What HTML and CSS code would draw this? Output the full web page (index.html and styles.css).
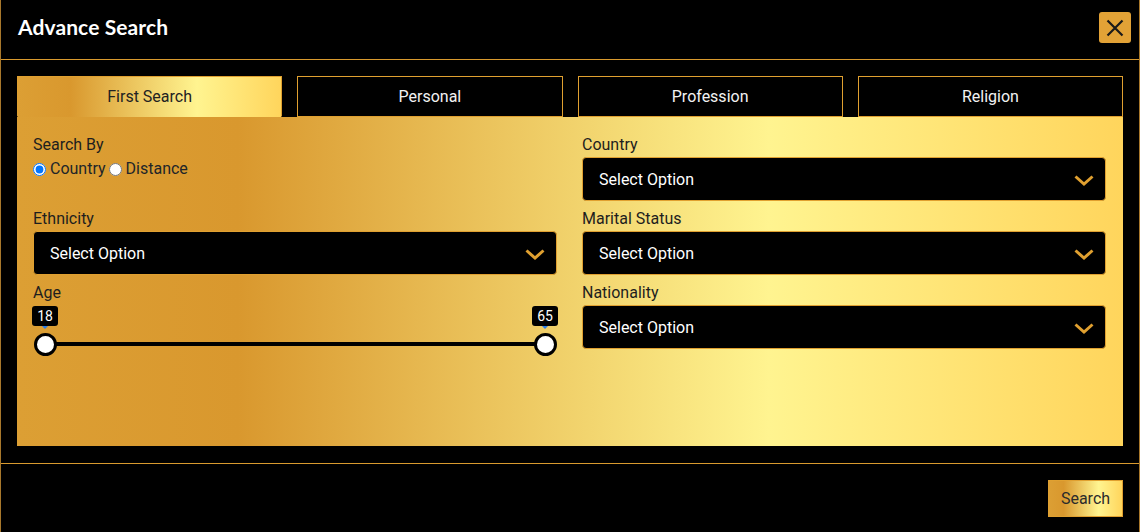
FILE: index.html
```html
<!DOCTYPE html>
<html lang="en">
<head>
<meta charset="utf-8">
<title>Advance Search</title>
<link rel="stylesheet" href="styles.css">
</head>
<body>
<div class="modal">
  <header class="modal-header">
    <h1 class="modal-title">Advance Search</h1>
    <button class="close-btn" aria-label="Close">
      <svg width="18" height="18" viewBox="0 0 18 18"><path d="M1.5 1.5 L16.5 16.5 M16.5 1.5 L1.5 16.5" stroke="#1a1a1a" stroke-width="2.2" fill="none"/></svg>
    </button>
  </header>
  <main class="modal-body">
    <nav class="tabs">
      <div class="tab active">First Search</div>
      <div class="tab">Personal</div>
      <div class="tab">Profession</div>
      <div class="tab">Religion</div>
    </nav>
    <section class="panel">
      <div class="col">
        <div class="group">
          <div class="label">Search By</div>
          <div class="radios">
            <label class="radio"><input type="radio" name="by" checked>Country</label>
            <label class="radio"><input type="radio" name="by">Distance</label>
          </div>
        </div>
        <div class="group">
          <div class="label">Ethnicity</div>
          <div class="select"><span>Select Option</span><svg class="chev" width="20" height="11" viewBox="0 0 20 11"><polyline points="1.5,1.5 10,9 18.5,1.5" fill="none" stroke="#e0a030" stroke-width="3"/></svg></div>
        </div>
        <div class="group">
          <div class="label">Age</div>
          <div class="range">
            <div class="track"></div>
            <div class="handle start"><span class="tip">18</span><span class="pin"></span><span class="thumb"></span></div>
            <div class="handle end"><span class="tip">65</span><span class="pin"></span><span class="thumb"></span></div>
          </div>
        </div>
      </div>
      <div class="col">
        <div class="group">
          <div class="label">Country</div>
          <div class="select"><span>Select Option</span><svg class="chev" width="20" height="11" viewBox="0 0 20 11"><polyline points="1.5,1.5 10,9 18.5,1.5" fill="none" stroke="#e0a030" stroke-width="3"/></svg></div>
        </div>
        <div class="group">
          <div class="label">Marital Status</div>
          <div class="select"><span>Select Option</span><svg class="chev" width="20" height="11" viewBox="0 0 20 11"><polyline points="1.5,1.5 10,9 18.5,1.5" fill="none" stroke="#e0a030" stroke-width="3"/></svg></div>
        </div>
        <div class="group">
          <div class="label">Nationality</div>
          <div class="select"><span>Select Option</span><svg class="chev" width="20" height="11" viewBox="0 0 20 11"><polyline points="1.5,1.5 10,9 18.5,1.5" fill="none" stroke="#e0a030" stroke-width="3"/></svg></div>
        </div>
      </div>
    </section>
  </main>
  <footer class="modal-footer">
    <button class="search-btn">Search</button>
  </footer>
</div>
</body>
</html>
```

FILE: styles.css
```css
* { box-sizing: border-box; }
html, body { margin: 0; padding: 0; background: #000; }
body {
  font-family: Roboto, "Liberation Sans", sans-serif;
  font-size: 16px;
  color: #212529;
  overflow: hidden;
}
.modal {
  width: 1140px;
  background: #000;
  border-left: 1px solid #a8782c;
  border-right: 1px solid #a8782c;
}
.modal-header {
  height: 60px;
  border-bottom: 1px solid #d99a2e;
  display: flex;
  align-items: center;
  justify-content: space-between;
  padding: 0 8px 0 17px;
}
.modal-title {
  margin: 0;
  margin-top: -6px;
  font-family: Lato, "Open Sans", sans-serif;
  font-weight: 700;
  font-size: 21px;
  color: #fff;
  letter-spacing: 0.1px;
}
.close-btn {
  width: 32px;
  height: 31px;
  margin-top: -4px;
  border: none;
  border-radius: 3px;
  background: #e2a236;
  display: flex;
  align-items: center;
  justify-content: center;
  padding: 0;
}
.modal-body { padding: 16px 16px 17px 16px; }
.tabs {
  display: grid;
  grid-template-columns: repeat(4, 1fr);
  gap: 15px;
}
.tab {
  height: 41px;
  border: 1px solid #e0a030;
  color: #f2f2f2;
  background: #000;
  display: flex;
  align-items: center;
  justify-content: center;
  font-size: 16px;
}
.tab.active {
  color: #222;
  border-color: #e0a030 #e0a030 transparent;
  background: linear-gradient(to right, #dc9f34 0%, #d9982e 20%, #fff490 68%, #ffd55c 100%);
}
.panel {
  height: 329px;
  padding: 16px 17px 0 16px;
  display: grid;
  grid-template-columns: 1fr 1fr;
  column-gap: 25px;
  align-content: start;
  background: linear-gradient(to right, #dc9f34 0%, #d9982e 20%, #fff490 68%, #ffd55c 100%);
}
.col { display: flex; flex-direction: column; }
.group { margin-bottom: 6px; }
.label { line-height: 24px; height: 24px; color: #1e1e1e; }
.radios { height: 44px; display: flex; align-items: flex-start; line-height: 24px; }
.radio { display: inline-flex; align-items: center; margin-right: 3px; }
.radio input { margin: 1px 4px 0 0; width: 13px; height: 13px; }
.select {
  height: 44px;
  background: #000;
  border: 1px solid #e0a030;
  border-radius: 4px;
  display: flex;
  align-items: center;
  justify-content: space-between;
  padding: 0 11px 0 16px;
  color: #fff;
}
.chev { display: block; margin-top: 2px; }
.range { position: relative; height: 56px; }
.track {
  position: absolute;
  left: 12px;
  right: 12px;
  top: 37px;
  height: 4px;
  background: #000;
}
.handle {
  position: absolute;
  top: 1px;
  width: 24px;
  height: 52px;
  display: flex;
  flex-direction: column;
  align-items: center;
}
.handle.start { left: 0; }
.handle.end { right: 0; }
.tip {
  height: 20px;
  min-width: 26px;
  padding: 0 4px;
  background: #000;
  color: #fff;
  font-size: 14px;
  line-height: 20px;
  text-align: center;
  border-radius: 3px;
}
.pin {
  width: 0;
  height: 0;
  border-left: 3px solid transparent;
  border-right: 3px solid transparent;
  border-top: 3px solid #2b7de9;
}
.thumb {
  margin-top: 4px;
  width: 23px;
  height: 23px;
  border-radius: 50%;
  background: #fff;
  border: 3px solid #000;
}
.modal-footer {
  border-top: 1px solid #d99a2e;
  padding: 16px 16px 16px;
  display: flex;
  justify-content: flex-end;
}
.search-btn {
  width: 75px;
  height: 37px;
  border: 1px solid #e0a030;
  background: linear-gradient(to right, #dc9f34 0%, #d9982e 20%, #fff490 68%, #ffd55c 100%);
  color: #2b2b2b;
  font-family: Roboto, "Liberation Sans", sans-serif;
  font-size: 16px;
  padding: 0;
}
```
